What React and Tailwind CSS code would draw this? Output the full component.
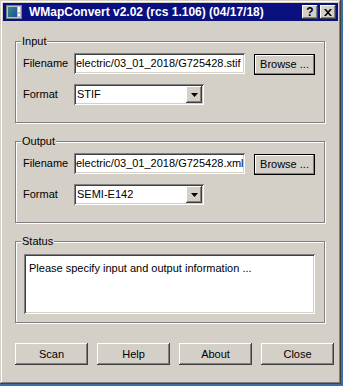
import React from "react";

const raised =
  "shadow-[inset_-1px_-1px_#404040,inset_1px_1px_#ffffff,inset_-2px_-2px_#808080,inset_2px_2px_#d4d0c8]";
const sunken =
  "shadow-[inset_1px_1px_#808080,inset_-1px_-1px_#ffffff,inset_2px_2px_#404040,inset_-2px_-2px_#d4d0c8]";

function AppIcon() {
  return (
    <svg width="16" height="16" viewBox="0 0 16 16">
      <rect x="0.5" y="1.5" width="15" height="13" fill="#c0c0c0" stroke="#808080" />
      <defs>
        <linearGradient id="ig" x1="0" y1="0" x2="1" y2="1">
          <stop offset="0" stopColor="#2f8f7f" />
          <stop offset="1" stopColor="#1f4fa0" />
        </linearGradient>
      </defs>
      <rect x="2" y="3" width="9" height="10" fill="url(#ig)" />
      <rect x="12" y="3" width="2" height="5" fill="#ffffff" />
      <rect x="12" y="10" width="2" height="2" fill="#ffffff" />
    </svg>
  );
}

function CaptionButton({ children }) {
  return (
    <div
      className={`w-[16px] h-[14px] bg-[#d4d0c8] ${raised} flex items-center justify-center text-black font-bold text-[12px] leading-none`}
    >
      {children}
    </div>
  );
}

function GroupBox({ title, children }) {
  return (
    <div className="relative w-[310px] h-[82px] border border-[#808080] shadow-[1px_1px_0_#ffffff,inset_1px_1px_0_#ffffff]">
      <span className="absolute left-[5px] top-[-8px] px-[1px] bg-[#d4d0c8] leading-[14px]">
        {title}
      </span>
      {children}
    </div>
  );
}

function Select({ value }) {
  return (
    <div className={`w-[130px] h-[21px] bg-white ${sunken} flex items-center p-[2px]`}>
      <span className="flex-1 pl-[1px]">{value}</span>
      <div className={`w-[16px] h-[17px] bg-[#d4d0c8] ${raised} flex items-center justify-center`}>
        <svg width="7" height="4" viewBox="0 0 7 4">
          <path d="M0 0h7L3.5 4z" fill="#000" />
        </svg>
      </div>
    </div>
  );
}

function FileRows({ file, format }) {
  return (
    <div className="flex flex-col pl-[7px] pt-[11px]">
      <div className="flex items-start h-[22px]">
        <span className="w-[51px] leading-[21px]">Filename</span>
        <div className={`w-[171px] h-[21px] bg-white ${sunken} overflow-hidden flex items-center pl-[2px] whitespace-nowrap`}>
          {file}
        </div>
        <button
          className={`ml-[9px] mt-[1px] w-[61px] h-[21px] bg-[#d4d0c8] border border-black shadow-[inset_-1px_-1px_#808080,inset_1px_1px_#ffffff] flex items-center justify-center`}
        >
          Browse ...
        </button>
      </div>
      <div className="flex items-center mt-[9px]">
        <span className="w-[51px]">Format</span>
        <Select value={format} />
      </div>
    </div>
  );
}

function PushButton({ children }) {
  return (
    <button className={`w-[73px] h-[22px] bg-[#d4d0c8] ${raised} flex items-center justify-center`}>
      {children}
    </button>
  );
}

export default function App() {
  return (
    <div
      className="w-[343px] h-[386px] bg-[#3a6ea5] text-[11px] text-black"
      style={{ fontFamily: '"Liberation Sans", Arial, sans-serif' }}
    >
      <div className="w-[341px] h-[384px] bg-[#d4d0c8] p-[3px] shadow-[inset_-1px_-1px_#404040,inset_1px_1px_#d4d0c8,inset_-2px_-2px_#808080,inset_2px_2px_#ffffff] flex flex-col">
        <div className="h-[18px] bg-[#0a1080] flex items-center pl-[3px] pr-[2px]">
          <AppIcon />
          <span className="ml-[7px] text-white font-bold text-[12px] flex-1 whitespace-nowrap">
            WMapConvert v2.02 (rcs 1.106) (04/17/18)
          </span>
          <CaptionButton>?</CaptionButton>
          <div className="ml-[2px]">
            <CaptionButton>
              <svg width="8" height="7" viewBox="0 0 8 7">
                <path d="M0 0h2l2 2.3L6 0h2L5 3.5 8 7H6L4 4.7 2 7H0l3-3.5z" fill="#000" />
              </svg>
            </CaptionButton>
          </div>
        </div>

        <div className="flex flex-col pl-[12px] pt-[20px]">
          <GroupBox title="Input">
            <FileRows file="electric/03_01_2018/G725428.stif" format="STIF" />
          </GroupBox>
          <div className="mt-[18px]">
            <GroupBox title="Output">
              <FileRows file="electric/03_01_2018/G725428.xml" format="SEMI-E142" />
            </GroupBox>
          </div>
          <div className="mt-[18px]">
            <GroupBox title="Status">
              <div className="pl-[8px] pt-[12px]">
                <div className={`w-[291px] h-[60px] bg-white ${sunken} pl-[5px] pt-[6px]`}>
                  Please specify input and output information ...
                </div>
              </div>
            </GroupBox>
          </div>
          <div className="mt-[20px] flex gap-[9px]">
            <PushButton>Scan</PushButton>
            <PushButton>Help</PushButton>
            <PushButton>About</PushButton>
            <PushButton>Close</PushButton>
          </div>
        </div>
      </div>
    </div>
  );
}
